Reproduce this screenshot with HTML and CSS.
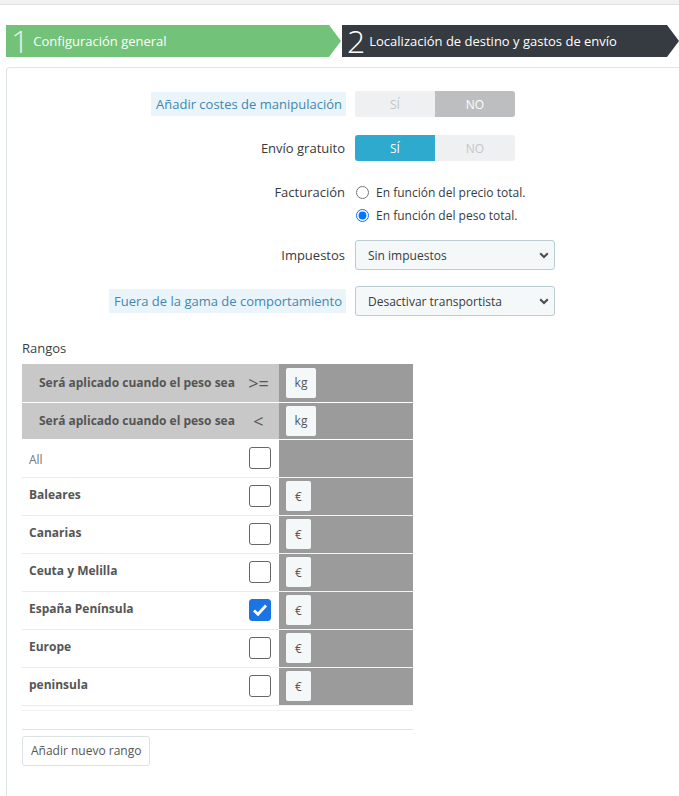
FILE: index.html
```html
<!DOCTYPE html>
<html lang="es">
<head>
<meta charset="utf-8">
<title>Transportista</title>
<link rel="stylesheet" href="styles.css">
</head>
<body>
<div class="topbar"></div>
<div class="steps">
  <div class="step step-done"><span class="num">1</span><span class="txt">Configuración general</span></div>
  <div class="step step-current"><span class="num">2</span><span class="txt">Localización de destino y gastos de envío</span></div>
</div>
<div class="panel">
  <div class="form">
    <div class="row row-t1">
      <div class="label"><span class="hint">Añadir costes de manipulación</span></div>
      <div class="switch"><span class="opt opt-off">SÍ</span><span class="opt opt-gray">NO</span></div>
    </div>
    <div class="row row-t2">
      <div class="label">Envío gratuito</div>
      <div class="switch"><span class="opt opt-blue">SÍ</span><span class="opt opt-off">NO</span></div>
    </div>
    <div class="row row-radio">
      <div class="label label-radio">Facturación</div>
      <div class="radios">
        <label class="radio"><input type="radio" name="billing"><span>En función del precio total.</span></label>
        <label class="radio"><input type="radio" name="billing" checked><span>En función del peso total.</span></label>
      </div>
    </div>
    <div class="row row-s1">
      <div class="label">Impuestos</div>
      <div class="select"><span>Sin impuestos</span><svg width="10" height="7" viewBox="0 0 10 7"><path d="M1.2 1.3 L5 5 L8.8 1.3" fill="none" stroke="#4a4a4a" stroke-width="2"/></svg></div>
    </div>
    <div class="row row-s2">
      <div class="label"><span class="hint">Fuera de la gama de comportamiento</span></div>
      <div class="select"><span>Desactivar transportista</span><svg width="10" height="7" viewBox="0 0 10 7"><path d="M1.2 1.3 L5 5 L8.8 1.3" fill="none" stroke="#4a4a4a" stroke-width="2"/></svg></div>
    </div>
  </div>

  <div class="ranges-title">Rangos</div>
  <table class="ranges">
    <tr class="head head-first">
      <th class="hname">Será aplicado cuando el peso sea</th>
      <th class="hop">&gt;=</th>
      <td class="gray"><span class="addon addon-kg">kg</span></td>
    </tr>
    <tr class="head head-second">
      <th class="hname">Será aplicado cuando el peso sea</th>
      <th class="hop">&lt;</th>
      <td class="gray"><span class="addon addon-kg">kg</span></td>
    </tr>
    <tr class="zone zone-all">
      <td class="zname">All</td>
      <td class="zcheck"><span class="cb"></span></td>
      <td class="gray"></td>
    </tr>
    <tr class="zone">
      <td class="zname">Baleares</td>
      <td class="zcheck"><span class="cb"></span></td>
      <td class="gray"><span class="addon">€</span></td>
    </tr>
    <tr class="zone">
      <td class="zname">Canarias</td>
      <td class="zcheck"><span class="cb"></span></td>
      <td class="gray"><span class="addon">€</span></td>
    </tr>
    <tr class="zone">
      <td class="zname">Ceuta y Melilla</td>
      <td class="zcheck"><span class="cb"></span></td>
      <td class="gray"><span class="addon">€</span></td>
    </tr>
    <tr class="zone">
      <td class="zname">España Península</td>
      <td class="zcheck"><span class="cb cb-on"><svg width="16" height="14" viewBox="0 0 16 14"><path d="M2 7.5 L6 11.2 L14 2.5" fill="none" stroke="#fff" stroke-width="2.8"/></svg></span></td>
      <td class="gray"><span class="addon">€</span></td>
    </tr>
    <tr class="zone">
      <td class="zname">Europe</td>
      <td class="zcheck"><span class="cb"></span></td>
      <td class="gray"><span class="addon">€</span></td>
    </tr>
    <tr class="zone">
      <td class="zname">peninsula</td>
      <td class="zcheck"><span class="cb"></span></td>
      <td class="gray"><span class="addon">€</span></td>
    </tr>
  </table>
  <div class="sep-faint"></div>
  <div class="sep"></div>
  <button class="btn" type="button">Añadir nuevo rango</button>
</div>
</body>
</html>
```

FILE: styles.css
```css
* { box-sizing: border-box; }
html, body { margin: 0; padding: 0; }
body {
  font-family: "Open Sans", "Noto Sans", sans-serif;
  color: #363a41;
  background: #fff;
  overflow: hidden;
  height: 796px;
}
.topbar {
  height: 5px;
  background: #f2f2f2;
  border-bottom: 1px solid #e2e2e2;
}
.steps {
  display: flex;
  margin-top: 20px;
  padding-left: 6px;
  height: 32px;
}
.step {
  display: flex;
  align-items: center;
  height: 32px;
  color: #fff;
  clip-path: polygon(0 0, calc(100% - 12px) 0, 100% 50%, calc(100% - 12px) 100%, 0 100%);
}
.step-done { width: 335px; background: #72c279; padding-left: 5px; }
.step-current { width: 337px; background: #363a41; margin-left: 1px; padding-left: 5px; }
.num {
  font-size: 32px;
  font-weight: 300;
  line-height: 32px;
  margin-right: 4px;
}
.step-done .num { color: #e6f4e7; }
.step-current .num { margin-right: 4px; }
.txt { font-size: 13px; line-height: 32px; }

.panel {
  margin: 10px 0 0 6px;
  border: 1px solid #dfe5e8;
  border-right: none;
  border-bottom: none;
  border-top-left-radius: 4px;
  padding: 23px 0 0 15px;
  height: 740px;
}
.form { display: flex; flex-direction: column; }
.row {
  display: grid;
  grid-template-columns: 323px auto;
  column-gap: 10px;
  align-items: center;
}
.row-t2 { margin-top: 18px; }
.row-radio { margin-top: 20px; align-items: start; }
.row-s1 { margin-top: 13px; }
.row-s2 { margin-top: 16px; }
.label {
  text-align: right;
  font-size: 13px;
  color: #363a41;
  line-height: 24px;
}
.label-radio { line-height: 23px; }
.hint {
  display: inline-block;
  background: #eaf5fb;
  color: #4486ae;
  padding: 0 4px 0 5px;
  line-height: 24px;
  margin-right: -1px;
}
.switch {
  display: flex;
  width: 160px;
  height: 26px;
  border-radius: 3px;
  overflow: hidden;
}
.opt {
  flex: 1;
  display: flex;
  align-items: center;
  justify-content: center;
  font-size: 12px;
}
.opt-off { background: #eef0f1; color: #c3c7ca; }
.opt-gray { background: #bdbebf; color: #fff; }
.opt-blue { background: #2eaacf; color: #fff; }
.radios { display: flex; flex-direction: column; }
.radio {
  display: flex;
  align-items: center;
  height: 23px;
  font-size: 12px;
  color: #363a41;
}
.radio input {
  margin: 0 7px 0 1px;
  width: 13px;
  height: 13px;
}
.select {
  width: 200px;
  height: 30px;
  display: flex;
  align-items: center;
  justify-content: space-between;
  border: 1px solid #bbcdd2;
  border-radius: 3px;
  background: #f5f8f9;
  padding: 0 5px 0 12px;
  font-size: 12px;
  color: #363a41;
}

.ranges-title {
  margin-top: 22px;
  font-size: 13px;
  line-height: 20px;
  color: #3b3f45;
  margin-bottom: 6px;
}
.ranges {
  border-collapse: collapse;
  width: 391px;
  table-layout: fixed;
}
.ranges td, .ranges th { padding: 0; }
.head th, .head td { border-bottom: 1px solid #fff; }
.head-first th, .head-first td { height: 38px; }
.head-second th, .head-second td { height: 37px; }
.hname {
  width: 216px;
  background: #c8c8c8;
  text-align: left;
  padding-left: 17px !important;
  font-size: 12px;
  font-weight: 700;
  color: #555;
  white-space: nowrap;
}
.hop {
  width: 41px;
  background: #c8c8c8;
  font-size: 18px;
  font-weight: 400;
  color: #555;
  text-align: center;
}
.gray {
  width: 134px;
  background: #9b9b9b;
  padding-left: 7px !important;
}
.addon {
  display: inline-flex;
  align-items: center;
  justify-content: center;
  width: 25px;
  height: 30px;
  background: #f5f8f9;
  border-radius: 2px;
  font-size: 12px;
  color: #555;
  vertical-align: middle;
}
.addon-kg { width: 30px; }
.zone td { height: 38px; border-bottom: 1px solid #eaeaea; }
.zone td.gray { border-bottom-color: #f4f4f4; }
.zname {
  padding-left: 7px !important;
  padding-bottom: 4px !important;
  font-size: 12px;
  font-weight: 700;
  color: #555;
}
.zone-all .zname { font-weight: 400; color: #777; padding-bottom: 0 !important; padding-top: 2px !important; }
.zcheck { padding-left: 11px !important; }
.cb {
  display: flex;
  align-items: center;
  justify-content: center;
  width: 22px;
  height: 22px;
  border: 1px solid #666;
  border-radius: 3px;
  background: #fff;
}
.cb-on { background: #1b74e4; border-color: #1b74e4; }
.sep-faint {
  margin-top: 4px;
  width: 391px;
  border-top: 1px solid #f3f3f3;
  height: 19px;
}
.sep {
  width: 391px;
  border-top: 1px solid #e3e3e3;
}
.btn {
  margin-top: 6px;
  display: block;
  height: 30px;
  padding: 0 8px;
  background: #fff;
  border: 1px solid #dbe2e5;
  border-radius: 3px;
  font-family: "Open Sans", "Noto Sans", sans-serif;
  font-size: 12px;
  color: #555;
}
```
